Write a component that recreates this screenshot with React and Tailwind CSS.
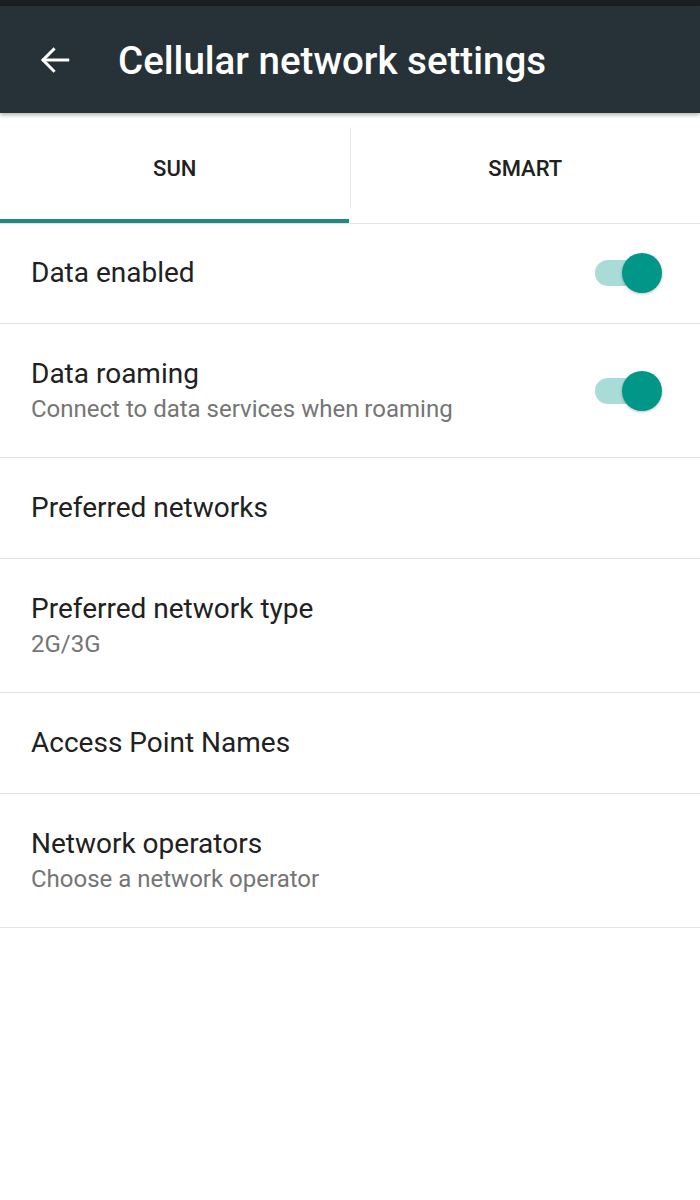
import { useState } from "react";

const Toggle = ({ on }) => (
    <div className="relative w-[68px] h-[40px] flex items-center">
        <div className={`absolute left-[1px] w-[60px] h-[26px] rounded-full ${on ? "bg-[#a9dcd6]" : "bg-gray-300"}`}></div>
        <div className={`absolute ${on ? "left-[28px]" : "left-0"} w-[40px] h-[40px] rounded-full bg-[#009688] shadow-[0_1px_3px_rgba(0,0,0,0.25)]`}></div>
    </div>
);

const Row = ({ title, subtitle, toggle }) => (
    <div className={`flex items-center justify-between pl-[31px] pr-[38px] border-b border-[#e3e3e3] ${subtitle ? "h-[134px]" : "h-[101px]"}`}>
        <div className="flex flex-col">
            <span className="text-[28px] leading-[36px] text-[#212121]">{title}</span>
            {subtitle && <span className="text-[24px] leading-[32px] text-[#757575] mt-[1px]">{subtitle}</span>}
        </div>
        {toggle !== undefined && <Toggle on={toggle} />}
    </div>
);

export default function App() {
    const [tab] = useState(0);
    const rows = [
        { title: "Data enabled", toggle: true },
        { title: "Data roaming", subtitle: "Connect to data services when roaming", toggle: true },
        { title: "Preferred networks" },
        { title: "Preferred network type", subtitle: "2G/3G" },
        { title: "Access Point Names" },
        { title: "Network operators", subtitle: "Choose a network operator" },
    ];

    return (
        <div className="w-[700px] h-[1200px] bg-white font-['Roboto',sans-serif] overflow-hidden">
            <div className="h-[6px] bg-[#1b1f21]"></div>
            <div className="relative z-10 h-[107px] bg-[#263238] flex items-center shadow-[0_2px_4px_rgba(0,0,0,0.3)]">
                <svg className="ml-[38px]" width="34" height="34" viewBox="0 0 24 24" fill="none" stroke="white" strokeWidth="2.1" strokeLinecap="square">
                    <path d="M21 12H4" />
                    <path d="M11 4.5 3.5 12 11 19.5" />
                </svg>
                <h1 className="ml-[46px] text-white text-[38.5px] font-medium mt-[2px]">Cellular network settings</h1>
            </div>
            <div className="flex h-[111px] border-b border-[#e3e3e3]">
                {["SUN", "SMART"].map((t, i) => (
                    <div key={t} className={`relative flex-1 flex items-center justify-center ${i === 0 ? "border-r border-[#e6e6e6] my-[15px]" : ""}`}>
                        <span className="text-[22px] font-medium text-[#212121]">{t}</span>
                    </div>
                ))}
            </div>
            <div className="relative -mt-[5px] h-[4px] w-[349px] bg-[#1f8a7f]" style={{ marginLeft: tab * 350 }}></div>
            {rows.map((r) => (
                <Row key={r.title} {...r} />
            ))}
        </div>
    );
}
